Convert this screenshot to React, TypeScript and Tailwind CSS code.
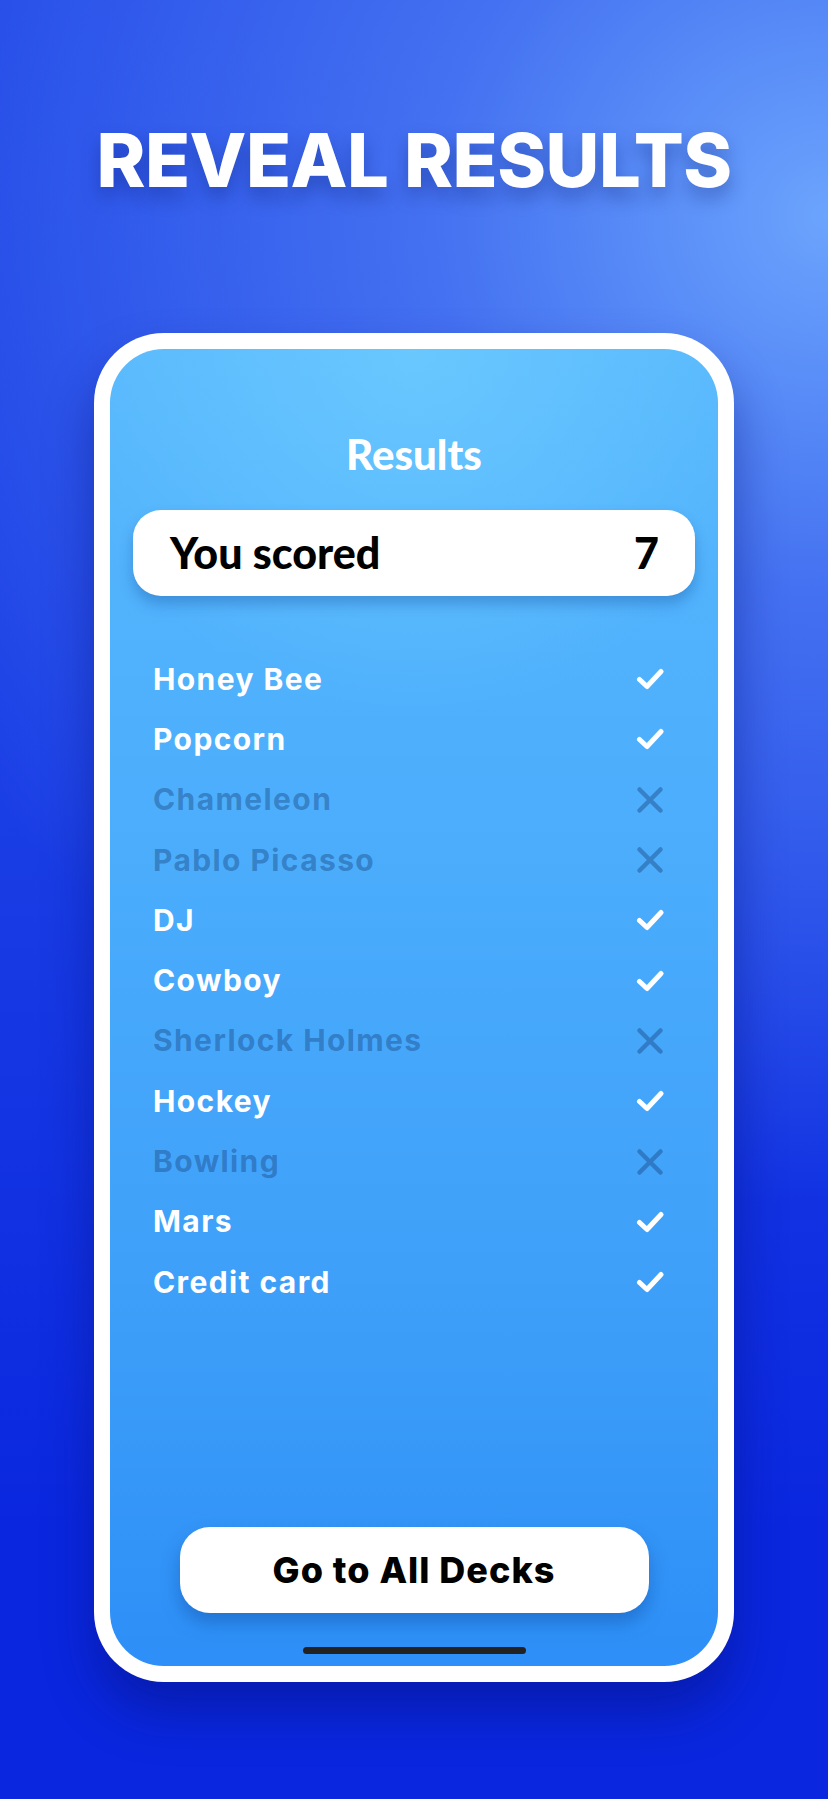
import React from "react";

type Item = { label: string; correct: boolean };

const items: Item[] = [
  { label: "Honey Bee", correct: true },
  { label: "Popcorn", correct: true },
  { label: "Chameleon", correct: false },
  { label: "Pablo Picasso", correct: false },
  { label: "DJ", correct: true },
  { label: "Cowboy", correct: true },
  { label: "Sherlock Holmes", correct: false },
  { label: "Hockey", correct: true },
  { label: "Bowling", correct: false },
  { label: "Mars", correct: true },
  { label: "Credit card", correct: true },
];

function CheckMark() {
  return (
    <svg width="28" height="22" viewBox="0 0 28 22" fill="none">
      <path d="M3.5 11.5L11 18.5L25 3.5" stroke="white" strokeWidth="5" strokeLinecap="round" strokeLinejoin="round" />
    </svg>
  );
}

function CrossMark() {
  return (
    <svg width="28" height="28" viewBox="0 0 28 28" fill="none" className="text-[#143c78]/40">
      <path d="M3.5 3.5L24.5 24.5M24.5 3.5L3.5 24.5" stroke="currentColor" strokeWidth="4.5" strokeLinecap="round" />
    </svg>
  );
}

export default function App() {
  return (
    <div className="flex min-h-[1799px] w-full flex-col items-center bg-[radial-gradient(ellipse_125%_55%_at_100%_12%,#6ba4fd_0%,rgba(78,125,244,0.8)_38%,rgba(40,80,235,0)_100%),linear-gradient(to_bottom,#1e44e6_0%,#1a3ee5_45%,#0a27df_85%)]">
      <h1 className="mt-[118px] h-[84px] text-center font-['Inter',sans-serif] text-[74px] font-extrabold leading-[84px] tracking-[-0.5px] text-white [text-shadow:0_10px_18px_rgba(10,25,110,0.35)]">
        REVEAL RESULTS
      </h1>

      <div className="mt-[131px] h-[1349px] w-[640px] rounded-[70px] bg-white p-[16px] shadow-[0_30px_50px_rgba(5,15,120,0.45)]">
        <div className="flex h-full flex-col rounded-[54px] bg-[radial-gradient(ellipse_60%_28%_at_50%_0%,rgba(112,206,255,0.7)_0%,rgba(112,206,255,0)_100%),linear-gradient(to_bottom,#58b8fd_0%,#4caefc_35%,#3e9ff9_72%,#2d8ff7_100%)] px-[23px]">
          <h2 className="mt-[85px] h-[40px] text-center font-['Lato',sans-serif] text-[42px] font-black leading-[40px] text-white">
            Results
          </h2>

          <div className="mt-[36px] flex h-[86px] items-center justify-between rounded-[28px] bg-white pl-[37px] pr-[36px] shadow-[0_8px_14px_rgba(10,60,140,0.3)]">
            <span className="font-['Lato',sans-serif] text-[43px] font-black text-black">You scored</span>
            <span className="font-['Lato',sans-serif] text-[43px] font-black text-black">7</span>
          </div>

          <ul className="mt-[53px] flex flex-col pl-[20px] pr-[31px]">
            {items.map((item) => (
              <li key={item.label} className="flex h-[60.3px] items-center justify-between">
                <span
                  className={
                    item.correct
                      ? "font-['Inter',sans-serif] text-[30px] font-bold tracking-[1.4px] text-white"
                      : "font-['Inter',sans-serif] text-[30px] font-bold tracking-[1.4px] text-[#143c78]/40"
                  }
                >
                  {item.label}
                </span>
                {item.correct ? <CheckMark /> : <CrossMark />}
              </li>
            ))}
          </ul>

          <button className="mx-auto mt-auto flex h-[86px] w-[469px] items-center justify-center rounded-[30px] bg-white shadow-[0_10px_18px_rgba(10,60,140,0.35)]">
            <span className="font-['Inter',sans-serif] text-[36px] font-extrabold tracking-[1px] text-black">Go to All Decks</span>
          </button>

          <div className="mx-auto mb-[12px] mt-[34px] h-[7px] w-[223px] rounded-full bg-[#222222]" />
        </div>
      </div>
    </div>
  );
}
